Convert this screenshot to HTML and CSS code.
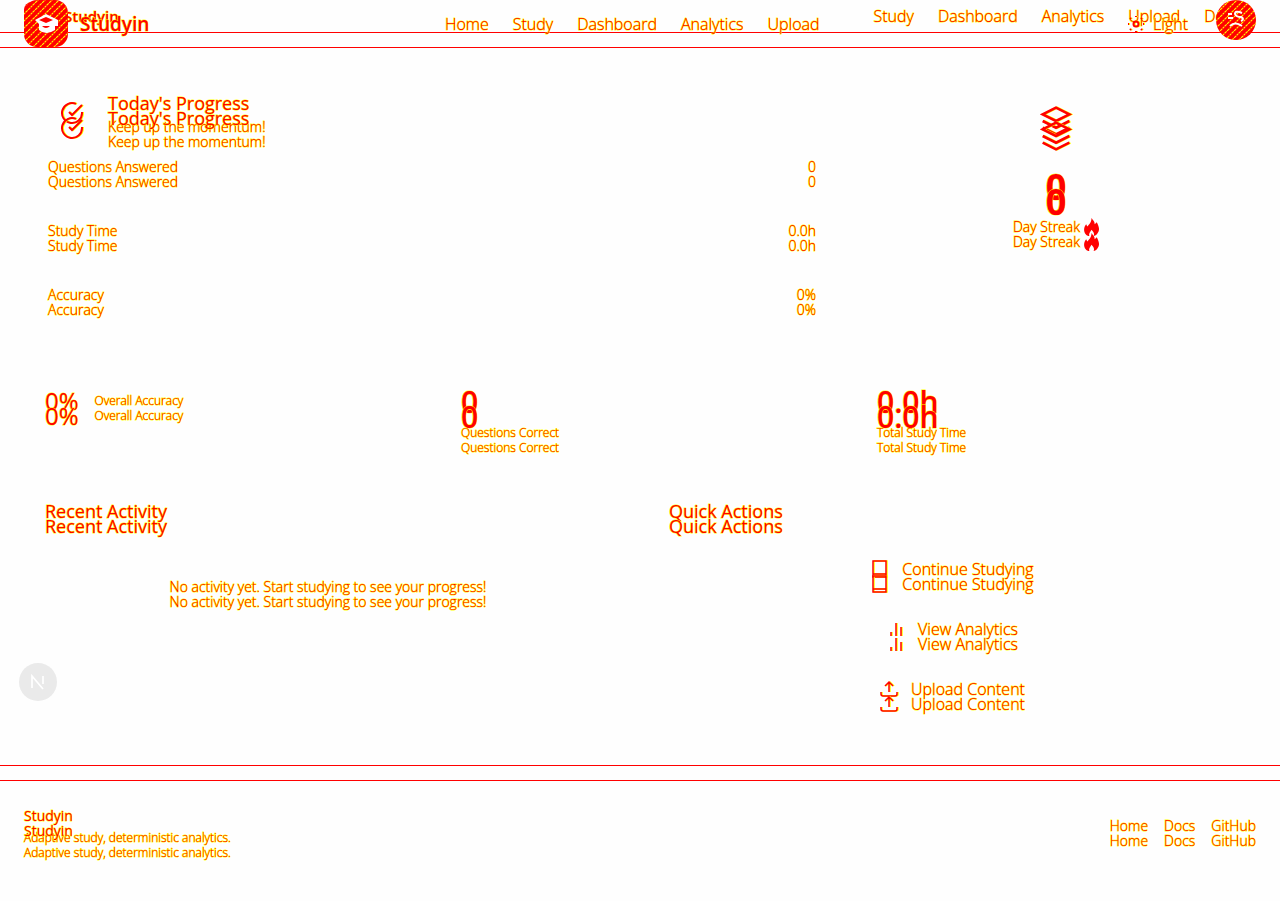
FILE: index.html
```html
<!DOCTYPE html>
<html lang="en">
<head>
<meta charset="utf-8">
<meta name="viewport" content="width=device-width, initial-scale=1">
<title>Studyin</title>
<link rel="stylesheet" href="styles.css">
</head>
<body>
<svg class="defs" aria-hidden="true">
  <defs>
    <pattern id="hatch" width="7" height="7" patternUnits="userSpaceOnUse"><path d="M-1 8 8-1M-1 1 1-1M6 8 8 6" stroke="#ff0" stroke-width="1.1" stroke-dasharray="3 0.6"/></pattern>
    <symbol id="check" viewBox="0 0 24 24"><path d="M22 11v1a10 10 0 1 1-6-9.100M22 4 12 14l-3-3"/></symbol>
    <symbol id="layers" viewBox="0 0 24 24"><path d="m12 2-10 5 10 5 10-5zM2 12l10 5 10-5M2 17l10 5 10-5"/></symbol>
    <symbol id="flame" viewBox="0 0 14 17"><path d="M7 0c2 3 3 3 3 6l2-2c2 4 3 7 1 10-1 2-3 3-4 3 1-2 0-4-2-6-1 2-3 4-2 6-3 0-5-3-5-6 0-2 1-4 2-5l1 2c2-2 4-4 4-8z"/></symbol>
    <symbol id="book" viewBox="0 0 20 20"><path d="M3 2h13v16H3zM3 15h13"/></symbol>
    <symbol id="bars" viewBox="0 0 20 20"><path d="M5 17v-4M10 17V4M15 17V8"/></symbol>
    <symbol id="upload" viewBox="0 0 20 20"><path d="M10 13V3M6 7l4-4 4 4M2 13v2q0 2 2 2h12q2 0 2-2v-2"/></symbol>
    <symbol id="sun" viewBox="0 0 18 18"><circle cx="9" cy="9" r="2.500"/><path d="M9 1v1M9 16v1M1 9h1M16 9h1M3 3l1 1M14 14l1 1M3 15l1-1M14 4l1-1"/></symbol>
  </defs>
</svg>

<div class="stack">
  <div class="layer">
    <header class="bar bar-compact">
      <a class="brand brand-small" href="#"><span class="mark"></span>Studyin</a>
      <nav class="nav nav-end"><a href="#">Study</a><a href="#">Dashboard</a><a href="#">Analytics</a><a href="#">Upload</a><a href="#">Docs</a></nav>
    </header>
    <main class="main">
      <section class="thirds">
        <div class="progress">
          <div class="head"><span class="head-icon"><svg class="icon i24"><use href="#check"/></svg></span><div><h2>Today's Progress</h2><p class="text">Keep up the momentum!</p></div></div>
          <div class="metrics">
            <div class="metric"><span>Questions Answered</span><span>0</span></div>
            <div class="metric"><span>Study Time</span><span>0.0h</span></div>
            <div class="metric"><span>Accuracy</span><span>0%</span></div>
          </div>
        </div>
        <div class="streak"><span class="streak-icon"><svg class="icon i32"><use href="#layers"/></svg></span><strong>0</strong><p class="text flame-line">Day Streak <svg class="flame"><use href="#flame"/></svg></p></div>
      </section>
      <section class="thirds">
        <div class="stat stat-row"><span class="rate">0%</span><span class="caption">Overall Accuracy</span></div>
        <div class="stat"><span class="number">0</span><span class="caption">Questions Correct</span></div>
        <div class="stat"><span class="number">0.0h</span><span class="caption">Total Study Time</span></div>
      </section>
      <section class="halves">
        <div class="panel"><h2>Recent Activity</h2><p class="text empty">No activity yet. Start studying to see your progress!</p></div>
        <div class="panel"><h2>Quick Actions</h2>
          <div class="actions">
            <button type="button"><svg class="icon i20"><use href="#book"/></svg>Continue Studying</button>
            <button type="button"><svg class="icon i20"><use href="#bars"/></svg>View Analytics</button>
            <button type="button"><svg class="icon i20"><use href="#upload"/></svg>Upload Content</button>
          </div>
        </div>
      </section>
    </main>
    <footer class="footer">
      <div class="about"><span class="name">Studyin</span><span class="caption">Adaptive study, deterministic analytics.</span></div>
      <nav class="links"><a href="#">Home</a><a href="#">Docs</a><a href="#">GitHub</a></nav>
    </footer>
  </div>

  <div class="layer">
    <header class="bar">
      <a class="brand" href="#">
        <svg class="logo" viewBox="0 0 44 47" aria-hidden="true"><rect width="44" height="47" rx="13" fill="#f00"/><rect width="44" height="47" rx="13" fill="url(#hatch)"/><path d="M11 20 22 14l12 6v6h-3v4q-9 6-16 0v-6z" fill="#fff"/><path d="m15 20 7-3 7 3-7 3zM18 26q4 4 8 0" fill="#f00"/></svg>
        Studyin</a>
      <nav class="nav"><a href="#">Home</a><a href="#">Study</a><a href="#">Dashboard</a><a href="#">Analytics</a><a href="#">Upload</a></nav>
      <div class="tools">
        <button class="theme" type="button"><svg class="icon sun"><use href="#sun"/></svg>Light</button>
        <svg class="avatar" viewBox="0 0 40 40" role="img" aria-label="Account"><circle cx="20" cy="20" r="20" fill="#f00"/><circle cx="20" cy="20" r="20" fill="url(#hatch)"/><path d="M12 14h4M12 18h5M26 13q-7-3-7 1 1 3 6 3 4 2 0 4M14 26q5-5 12 0" fill="none" stroke="#fff" stroke-width="2"/></svg>
      </div>
    </header>
    <main class="main">
      <section class="thirds">
        <div class="progress">
          <div class="head"><span class="head-icon"><svg class="icon i24"><use href="#check"/></svg></span><div><h2>Today's Progress</h2><p class="text">Keep up the momentum!</p></div></div>
          <div class="metrics">
            <div class="metric"><span>Questions Answered</span><span>0</span></div>
            <div class="metric"><span>Study Time</span><span>0.0h</span></div>
            <div class="metric"><span>Accuracy</span><span>0%</span></div>
          </div>
        </div>
        <div class="streak"><span class="streak-icon"><svg class="icon i32"><use href="#layers"/></svg></span><strong>0</strong><p class="text flame-line">Day Streak <svg class="flame"><use href="#flame"/></svg></p></div>
      </section>
      <section class="thirds">
        <div class="stat stat-row"><span class="rate">0%</span><span class="caption">Overall Accuracy</span></div>
        <div class="stat"><span class="number">0</span><span class="caption">Questions Correct</span></div>
        <div class="stat"><span class="number">0.0h</span><span class="caption">Total Study Time</span></div>
      </section>
      <section class="halves">
        <div class="panel"><h2>Recent Activity</h2><p class="text empty">No activity yet. Start studying to see your progress!</p></div>
        <div class="panel"><h2>Quick Actions</h2>
          <div class="actions">
            <button type="button"><svg class="icon i20"><use href="#book"/></svg>Continue Studying</button>
            <button type="button"><svg class="icon i20"><use href="#bars"/></svg>View Analytics</button>
            <button type="button"><svg class="icon i20"><use href="#upload"/></svg>Upload Content</button>
          </div>
        </div>
      </section>
    </main>
    <footer class="footer">
      <div class="about"><span class="name">Studyin</span><span class="caption">Adaptive study, deterministic analytics.</span></div>
      <nav class="links"><a href="#">Home</a><a href="#">Docs</a><a href="#">GitHub</a></nav>
    </footer>
  </div>
</div>
<button class="badge" type="button" aria-label="Developer tools"><svg viewBox="0 0 38 38" aria-hidden="true"><path d="M13 25V13l11 13M24 13v8" fill="none" stroke="#fff" stroke-width="1.700"/></svg></button>
</body>
</html>
```
FILE: styles.css
```css
* { box-sizing: border-box; }
body {
  margin: 0;
  background: #fefefe;
  color: #f00;
  font-family: "Open Sans", "Noto Sans", sans-serif;
  font-size: 14px;
  font-weight: 300;
  line-height: 20px;
  -webkit-text-stroke: 1px #ff0;
  paint-order: stroke fill;
}
h2, p { margin: 0; }
h2 { font-size: 18px; line-height: 28px; font-weight: 400; }
a { color: inherit; text-decoration: none; }
button { border: 0; background: none; color: inherit; font: inherit; padding: 0; cursor: pointer; -webkit-text-stroke: inherit; }
.defs { position: absolute; width: 0; height: 0; }
.icon { fill: none; stroke: #f00; stroke-width: 2; filter: drop-shadow(1px 0 0 #ff0); flex: none; }
.i20 { width: 20px; height: 20px; stroke-width: 1.5; }
.i24 { width: 24px; height: 24px; }
.i32 { width: 32px; height: 32px; }

.stack { display: grid; }
.layer { grid-area: 1 / 1; min-width: 0; }

.bar {
  display: flex;
  align-items: center;
  justify-content: space-between;
  height: 48px;
  padding: 0 24px;
  border-bottom: 1px solid #f00;
}
.bar-compact { height: 33px; }
.brand { display: flex; align-items: center; gap: 12px; font-size: 19px; font-weight: 600; }
.brand-small { gap: 8px; font-size: 15px; }
.mark { width: 32px; height: 28px; border-radius: 8px; background: #f00; }
.logo { width: 44px; height: 47px; }
.nav { display: flex; gap: 24px; font-size: 16px; }
.nav-end { padding-right: 16px; }
.tools { display: flex; align-items: center; align-self: stretch; gap: 16px; }
.theme { display: flex; align-items: center; gap: 8px; padding: 8px 12px; font-size: 16px; }
.sun { width: 18px; height: 18px; }
.sun circle { fill: #f00; }
.avatar { width: 40px; height: 40px; align-self: flex-start; }

.main { display: grid; gap: 16px; padding: 32px 24px; }
.thirds { display: grid; grid-template-columns: repeat(3, 1fr); gap: 16px; }
.halves { display: grid; grid-template-columns: repeat(2, 1fr); gap: 16px; }
.progress { grid-column: span 2; padding: 24px; }
.head { display: flex; gap: 12px; margin-bottom: 20px; }
.head-icon { display: grid; place-items: center; width: 48px; height: 48px; }
.metrics { display: grid; gap: 24px; }
.metric { display: flex; justify-content: space-between; height: 40px; }
.streak { display: flex; flex-direction: column; align-items: center; padding: 24px; }
.streak-icon { display: grid; place-items: center; width: 64px; height: 64px; margin-bottom: 16px; }
.streak strong { font-size: 36px; line-height: 36px; font-weight: 700; margin-bottom: 12px; }
.flame-line { display: flex; align-items: center; gap: 4px; }
.flame { width: 15px; height: 18px; fill: #f00; }
.stat { display: flex; flex-direction: column; gap: 6px; padding: 20px 21px; }
.stat-row { flex-direction: row; gap: 16px; }
.stat-row .caption { line-height: 32px; }
.rate { font-size: 24px; line-height: 32px; font-weight: 400; }
.number { font-size: 30px; line-height: 34px; font-weight: 600; }
.caption { font-size: 12px; line-height: 16px; }
.panel { padding: 20px 21px; }
.empty { padding: 52px 0 32px; text-align: center; }
.actions { display: grid; gap: 12px; padding-top: 20px; }
.actions button { display: flex; align-items: center; justify-content: center; gap: 12px; height: 48px; font-size: 16px; }

.footer {
  display: flex;
  align-items: center;
  justify-content: space-between;
  padding: 40px 24px;
  border-top: 1px solid #f00;
}
.about { display: grid; gap: 4px; }
.name { font-weight: 400; }
.links { display: flex; gap: 16px; }

.badge { position: fixed; left: 19px; bottom: 200px; width: 38px; height: 38px; border-radius: 50%; background: #eaeaea; }
.badge svg { display: block; }
```
